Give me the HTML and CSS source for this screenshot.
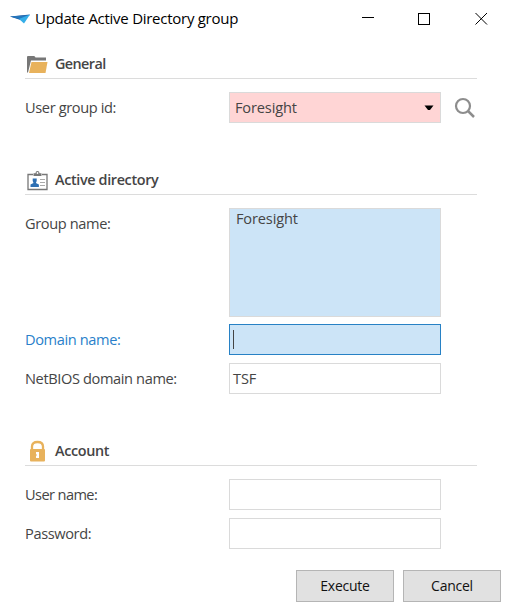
FILE: index.html
```html
<!DOCTYPE html>
<html lang="en">
<head>
<meta charset="utf-8">
<title>Update Active Directory group</title>
<link rel="stylesheet" href="styles.css">
</head>
<body>
<div class="dialog">
  <header class="titlebar">
    <svg class="app-icon" width="20" height="12" viewBox="0 0 20 12"><path fill="#1e579f" d="M0 3.500 20 1.500 12 7.500Z"/><path fill="#2577bd" d="M0 3.500 20 2 11 6.500Z"/><path fill="#35aee8" d="M9 6 20 1.500 14 10.500Z"/></svg>
    <h1 class="title">Update Active Directory group</h1>
    <svg class="controls" width="126" height="14" viewBox="0 0 126 14" fill="none" stroke="#000" stroke-width="1"><path d="M0 5.500h12M56.500 1.500h11v11h-11z" shape-rendering="crispEdges"/><path d="m113.500 1 11.500 11.500m0-11.500-11.500 11.500"/></svg>
  </header>
  <section class="section">
    <h2 class="heading general"><svg width="22" height="22" viewBox="0 0 22 22"><path fill="#777" d="M0 4Q0 3 1 3h6q1 0 1.500 1.500H19v3H4L1 19.500H0z"/><path fill="#e8b25c" d="M4.500 9H20.500L18.500 20H2z"/></svg><span>General</span></h2>
    <div class="row"><label>User group id:</label><div class="field select"><span>Foresight</span><svg width="10" height="6" viewBox="0 0 10 6"><path d="M.5.500h9L6 5H4z"/></svg></div><svg class="search" width="22" height="22" viewBox="0 0 22 22" fill="none" stroke="#8d8d8d"><circle cx="9" cy="9" r="7" stroke-width="2.200"/><path d="m14 14 6 6" stroke-width="2.500"/></svg></div>
  </section>
  <section class="section">
    <h2 class="heading"><svg width="22" height="22" viewBox="0 0 22 22"><path d="M6 5.500H1v15h19v-15h-5" fill="none" stroke="#777" stroke-width="1.300"/><path d="M6.500 7V4.200h2Q8.500 2 10.500 2t2 2.200h2V7z" fill="#777"/><circle cx="10.500" cy="4" r=".9" fill="#fff"/><path d="M3.500 18v-2.500l3-1.500-.8-2V9.500h4V12l-.8 2 3 1.500V18z" fill="#2f70b3"/><path d="M13 10.500h5M13 13.500h5M13 16.500h5" stroke="#aaa"/></svg><span>Active directory</span></h2>
    <div class="row"><label>Group name:</label><div class="field area"><span>Foresight</span></div></div>
    <div class="row"><label class="active">Domain name:</label><div class="field focus"><i class="caret"></i></div></div>
    <div class="row"><label>NetBIOS domain name:</label><div class="field"><span>TSF</span></div></div>
  </section>
  <section class="section">
    <h2 class="heading"><svg width="22" height="22" viewBox="0 0 22 22"><path d="M5 10V6.500Q5 2 10.500 2T16 6.500V10" fill="none" stroke="#e8b25c" stroke-width="2.300"/><rect x="3" y="9" width="15" height="12.500" rx="1" fill="#e8b25c"/><path d="M9 12h3v6H9z" fill="#fff"/><path d="M9 14.500h1v1H9z" fill="#e8b25c"/></svg><span>Account</span></h2>
    <div class="row"><label class="tight">User name:</label><div class="field"></div></div>
    <div class="row"><label>Password:</label><div class="field"></div></div>
  </section>
  <footer class="actions"><button type="button">Execute</button><button type="button">Cancel</button></footer>
</div>
</body>
</html>
```
FILE: styles.css
```css
* { box-sizing: border-box; }
body { margin: 0; background: #fff; color: #454545; font: 14.6px/20px "Open Sans", "Noto Sans", sans-serif; }
.dialog { width: 510px; height: 609px; overflow: hidden; }
svg { display: block; flex: none; }
.titlebar { height: 37px; display: flex; align-items: center; padding-left: 10px; }
.title { margin: 0 0 0 5px; padding-bottom: 2px; width: 327px; font-size: 15px; font-weight: 400; color: #000; letter-spacing: -.27px; }
.section { margin: 9px 33px 39px 25px; }
.section + .section { margin-top: 0; }
.heading { display: flex; align-items: center; height: 33px; margin: 0 0 13px; padding: 4px 0 0 2px; border-bottom: 1px solid #dcdcdc; font-size: 14.4px; font-weight: 600; letter-spacing: -.36px; }
.heading svg { margin-right: 6px; }
.general { letter-spacing: -.6px; }
.row { display: flex; align-items: flex-start; margin-bottom: 8px; }
.row:last-child { margin-bottom: 0; }
label { width: 204px; line-height: 31px; letter-spacing: -.38px; }
.tight { letter-spacing: -.6px; }
.field { width: 212px; height: 31px; border: 1px solid #dadada; padding: 0 3px; display: flex; align-items: center; letter-spacing: -.16px; }
.field span { line-height: 18px; padding-bottom: 1px; }
.select { background: #ffd5d5; justify-content: space-between; padding: 0 6px 0 5px; }
.search { margin: 5px 0 0 13px; }
.area { height: 109px; background: #cce4f7; align-items: flex-start; padding-left: 6px; margin-bottom: -1px; }
.active { color: #2a7fca; }
.focus { background: #cce4f7; border-color: #2781c5; }
.caret { width: 1px; height: 19px; background: #444; }
.actions { display: flex; justify-content: flex-end; gap: 9px; margin: -18px 9px 0 0; }
button { width: 98px; height: 32px; padding: 0; border: 1px solid #b5b5b5; background: #e1e1e1; color: #111; font: 14px/20px "Open Sans", sans-serif; letter-spacing: -.25px; }
```
